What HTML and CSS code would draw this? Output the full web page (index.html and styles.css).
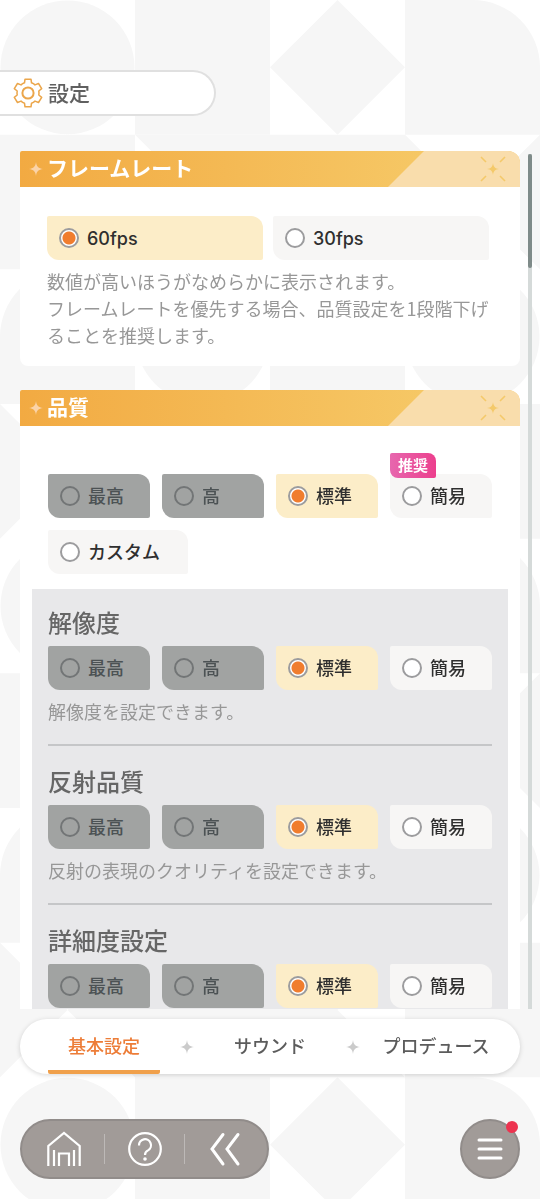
FILE: index.html
```html
<!DOCTYPE html>
<html lang="ja">
<head>
<meta charset="utf-8">
<meta name="viewport" content="width=device-width, initial-scale=1">
<title>設定</title>
<link rel="stylesheet" href="styles.css">
</head>
<body>
<svg class="backdrop" viewBox="0 0 540 1212" preserveAspectRatio="xMidYMin slice" aria-hidden="true">
  <defs>
    <path id="full" d="M0 0H135V135H0Z"/>
    <circle id="disc" cx="67.5" cy="67.5" r="67"/>
    <path id="diamond" d="M67.5 0L135 67.5L67.5 135L0 67.5Z"/>
    <path id="round-right" d="M0 0H67.5A67.5 67.5 0 0 1 135 67.5V135H0Z"/>
    <path id="round-left" d="M135 0H67.5A67.5 67.5 0 0 0 0 67.5V135H135Z"/>
    <path id="bowtie" d="M0 0L67.5 67.5L135 0V135L67.5 67.5L0 135Z"/>
    <path id="notch-left" d="M0 0H135V135H0L67.5 67.5Z"/>
    <path id="notch-right" d="M0 0H135L67.5 67.5L135 135H0Z"/>
    <g id="rows">
      <use href="#disc"/><use href="#full" x="135"/><use href="#diamond" x="270"/><use href="#round-right" x="405"/>
    </g>
  </defs>
  <g class="backdrop-shapes" transform="scale(1 0.9975)">
    <use href="#rows"/>
    <use href="#full" y="135"/><use href="#notch-left" x="135" y="135"/><use href="#full" x="270" y="135"/><use href="#bowtie" x="405" y="135"/>
    <use href="#round-left" y="270"/><use href="#disc" x="135" y="270"/><use href="#full" x="270" y="270"/><use href="#disc" x="405" y="270"/>
    <use href="#bowtie" y="405"/><use href="#full" x="135" y="405"/><use href="#diamond" x="270" y="405"/><use href="#full" x="405" y="405"/>
    <use href="#disc" y="540"/><use href="#full" x="135" y="540"/><use href="#diamond" x="270" y="540"/><use href="#round-right" x="405" y="540"/>
    <use href="#full" y="675"/><use href="#notch-left" x="135" y="675"/><use href="#full" x="270" y="675"/><use href="#bowtie" x="405" y="675"/>
    <use href="#round-left" y="810"/><use href="#disc" x="135" y="810"/><use href="#full" x="270" y="810"/><use href="#disc" x="405" y="810"/>
    <use href="#bowtie" y="945"/><use href="#full" x="135" y="945"/><use href="#notch-right" x="270" y="945"/><use href="#full" x="405" y="945"/>
    <use href="#rows" y="1080"/>
  </g>
</svg>
<svg class="symbols" width="0" height="0" aria-hidden="true">
  <symbol id="star" viewBox="0 0 14 14"><path d="M7 0C7.5 4.500 9.500 6.500 14 7C9.500 7.500 7.500 9.500 7 14C6.500 9.500 4.500 7.500 0 7C4.500 6.500 6.500 4.500 7 0Z"/></symbol>
  <symbol id="burst" viewBox="0 0 26 26"><path d="M13 7C13.500 11 15 12.500 19 13C15 13.500 13.500 15 13 19C12.500 15 11 13.500 7 13C11 12.500 12.500 11 13 7Z"/><path d="M1 1L6 6M25 1L20 6M1 25L6 20M25 25L20 20" fill="none" stroke="currentColor" stroke-width="1.600"/></symbol>
</svg>

<div class="app">
  <header class="page-title">
    <svg class="gear" viewBox="0 0 30 30" aria-hidden="true">
      <path d="M11.500 4.800L12 1.200H18L18.500 4.800Q20.500 5.500 22 6.900L25.500 5.500L28.700 10.700L25.800 13Q26.200 15 25.800 17L28.700 19.300L25.500 24.500L22 23.100Q20.500 24.500 18.500 25.200L18 28.800H12L11.500 25.200Q9.500 24.500 8 23.100L4.500 24.500L1.300 19.300L4.200 17Q3.800 15 4.200 13L1.300 10.700L4.500 5.500L8 6.900Q9.500 5.500 11.500 4.800Z"/>
      <circle cx="15" cy="15" r="5.600"/>
    </svg>
    <h1>設定</h1>
  </header>

  <div class="content">
    <main class="scroller">
      <section class="card">
        <header class="card-head">
          <svg class="head-star"><use href="#star"/></svg>
          <h2>フレームレート</h2>
          <div class="head-tail"><svg><use href="#burst"/></svg></div>
        </header>
        <div class="card-body framerate">
          <div class="pair">
            <label class="chip"><input type="radio" name="fps" checked><span>60fps</span></label>
            <label class="chip"><input type="radio" name="fps"><span>30fps</span></label>
          </div>
          <p class="note">数値が高いほうがなめらかに表示されます。<br>フレームレートを優先する場合、品質設定を1段階下げることを推奨します。</p>
        </div>
      </section>

      <section class="card">
        <header class="card-head">
          <svg class="head-star"><use href="#star"/></svg>
          <h2>品質</h2>
          <div class="head-tail"><svg><use href="#burst"/></svg></div>
        </header>
        <div class="card-body quality">
          <div class="quad">
            <label class="chip"><input type="radio" name="quality" disabled><span>最高</span></label>
            <label class="chip"><input type="radio" name="quality" disabled><span>高</span></label>
            <label class="chip"><input type="radio" name="quality" checked><span>標準</span></label>
            <label class="chip"><input type="radio" name="quality"><span>簡易</span><em class="badge">推奨</em></label>
          </div>
          <label class="chip custom"><input type="radio" name="quality"><span>カスタム</span></label>
        </div>
        <div class="details">
          <section class="detail">
            <h3>解像度</h3>
            <div class="quad">
              <label class="chip"><input type="radio" name="resolution" disabled><span>最高</span></label>
              <label class="chip"><input type="radio" name="resolution" disabled><span>高</span></label>
              <label class="chip"><input type="radio" name="resolution" checked><span>標準</span></label>
              <label class="chip"><input type="radio" name="resolution"><span>簡易</span></label>
            </div>
            <p class="note">解像度を設定できます。</p>
          </section>
          <section class="detail">
            <h3>反射品質</h3>
            <div class="quad">
              <label class="chip"><input type="radio" name="reflection" disabled><span>最高</span></label>
              <label class="chip"><input type="radio" name="reflection" disabled><span>高</span></label>
              <label class="chip"><input type="radio" name="reflection" checked><span>標準</span></label>
              <label class="chip"><input type="radio" name="reflection"><span>簡易</span></label>
            </div>
            <p class="note">反射の表現のクオリティを設定できます。</p>
          </section>
          <section class="detail">
            <h3>詳細度設定</h3>
            <div class="quad">
              <label class="chip"><input type="radio" name="lod" disabled><span>最高</span></label>
              <label class="chip"><input type="radio" name="lod" disabled><span>高</span></label>
              <label class="chip"><input type="radio" name="lod" checked><span>標準</span></label>
              <label class="chip"><input type="radio" name="lod"><span>簡易</span></label>
            </div>
          </section>
        </div>
      </section>
    </main>
    <div class="track"><div class="thumb"></div></div>
  </div>

  <nav class="tabs">
    <button class="tab active" type="button">基本設定</button>
    <svg><use href="#star"/></svg>
    <button class="tab" type="button">サウンド</button>
    <svg><use href="#star"/></svg>
    <button class="tab" type="button">プロデュース</button>
  </nav>

  <footer class="bottom">
    <div class="dock">
      <button type="button" aria-label="ホーム">
        <svg viewBox="0 0 36 36"><path d="M2.300 35V15L18 2L33.700 15V35M8 35V19M28 35V19M13 35V22.500H23V35"/></svg>
      </button>
      <button type="button" aria-label="ヘルプ">
        <svg viewBox="0 0 36 36"><circle cx="18" cy="18" r="15.800"/><path d="M12 14.500A6 6 0 1 1 21 19.400Q18 21 18 24"/><circle class="dot" cx="18" cy="28" r="1.800"/></svg>
      </button>
      <button type="button" aria-label="戻る">
        <svg viewBox="0 0 36 36"><path class="thick" d="M16 3.500L5 18L16 33M31 3.500L20 18L31 33"/></svg>
      </button>
    </div>
    <button class="menu" type="button" aria-label="メニュー">
      <svg viewBox="0 0 26 26"><path class="thick" d="M2 4H24M2 13H24M2 22H24"/></svg>
      <span class="alert"></span>
    </button>
  </footer>
</div>
</body>
</html>
```
FILE: styles.css
```css
* {
  box-sizing: border-box;
}

body {
  margin: 0;
  background: #fff;
  color: #2f2f2f;
  font-family: "Noto Sans CJK JP", sans-serif;
  font-size: 18px;
  line-height: 27px;
}

h1, h2, h3, p {
  margin: 0;
}

button {
  margin: 0;
  padding: 0;
  border: 0;
  background: none;
  font: inherit;
  color: inherit;
}

svg {
  display: block;
}

.symbols {
  position: absolute;
}

.backdrop {
  position: fixed;
  inset: 0;
  width: 100%;
  height: 101%;
  z-index: -1;
}

.backdrop-shapes {
  fill: #f6f6f6;
}

.app {
  display: flex;
  flex-direction: column;
  height: 100vh;
  padding: 70px 0 20px;
}

/* Title pill */
.page-title {
  display: flex;
  align-items: center;
  align-self: flex-start;
  gap: 5px;
  width: 40%;
  height: 46px;
  padding-left: 13px;
  background: #fff;
  border: 2px solid #e0e0e0;
  border-left: 0;
  border-radius: 0 23px 23px 0;
}

.page-title h1 {
  padding-bottom: 2px;
  font-size: 21px;
  font-weight: 500;
  color: #606060;
}

.gear {
  width: 30px;
  height: 30px;
  fill: none;
  stroke: #eba64b;
  stroke-width: 1.5;
  stroke-linejoin: round;
}

.gear circle {
  stroke-width: 2;
}

/* Scrolling settings */
.content {
  display: flex;
  flex: 1;
  gap: 8px;
  min-height: 0;
  margin-top: 35px;
  padding: 0 8px 0 20px;
}

.scroller {
  flex: 1;
  overflow-y: auto;
  scrollbar-width: none;
}

.track {
  width: 4px;
  margin-top: 3px;
  background: #d5dad9;
}

.thumb {
  height: 114px;
  border-radius: 2px;
  background: #7f8b89;
}

.card {
  margin-bottom: 24px;
  background: rgba(255, 255, 255, 0.94);
  border-radius: 2px 12px 8px 8px;
  overflow: hidden;
}

.card-head {
  display: flex;
  align-items: center;
  gap: 4px;
  height: 36px;
  padding-left: 9px;
  background: linear-gradient(90deg, #f2aa42, #f6c967 85%);
  color: #fff;
}

.card-head h2 {
  flex: 1;
  padding-bottom: 3px;
  font-size: 21px;
  font-weight: 700;
}

.head-star {
  width: 14px;
  height: 14px;
  fill: #fbd3a8;
}

.head-tail {
  display: flex;
  align-items: center;
  justify-content: flex-end;
  width: 132px;
  height: 100%;
  padding-right: 14px;
  background: #f9ddac;
  clip-path: polygon(36px 0, 100% 0, 100% 100%, 0 100%);
}

.head-tail svg {
  width: 26px;
  height: 26px;
  fill: #f4c96a;
  color: #f4c96a;
}

.framerate {
  padding: 29px 31px 17px 27px;
}

.quality {
  padding: 48px 28px 15px;
}

.pair, .quad {
  display: grid;
  grid-template-columns: 1fr 1fr;
  gap: 10px;
}

.quad {
  grid-template-columns: repeat(4, 1fr);
  gap: 12px;
}

.note {
  margin-top: 8px;
  color: #979797;
}

/* Radio chips */
.chip {
  position: relative;
  display: flex;
  align-items: center;
  gap: 8px;
  height: 44px;
  padding-left: 12px;
  background: #f7f6f5;
  border-radius: 2px 12px 2px 12px;
  font-family: Inter, "Noto Sans CJK JP", sans-serif;
  font-weight: 500;
}

.chip input {
  appearance: none;
  width: 20px;
  height: 20px;
  margin: 0;
  border: 2px solid #9c9c9e;
  border-radius: 50%;
  background: #fff;
}

.chip input:checked {
  background: radial-gradient(circle, #f07d2e 6px, #fff 7px);
}

.chip:has(:checked) {
  background: #fcedc8;
}

.chip:has(:disabled) {
  background: #a1a3a2;
  color: #4c5254;
}

.chip input:disabled {
  border-color: #727576;
  background: none;
}

.custom {
  width: 140px;
  margin-top: 12px;
}

.badge {
  position: absolute;
  top: -21px;
  left: 0;
  padding: 0 8px;
  background: linear-gradient(90deg, #e767ae, #ec3f8d);
  border-radius: 2px 8px 2px 8px;
  color: #fff;
  font-size: 15px;
  font-style: normal;
  font-weight: 700;
  line-height: 25px;
}

.details {
  margin: 0 12px;
  padding: 0 16px;
  background: #e8e8ea;
}

.detail {
  padding: 16px 0 19px;
}

.detail + .detail {
  padding-top: 18px;
  border-top: 2px solid #c5c6c8;
}

.detail h3 {
  margin-bottom: 7px;
  font-size: 24px;
  font-weight: 500;
  line-height: 34px;
  color: #666;
}

/* Tabs */
.tabs {
  display: grid;
  grid-template-columns: 1fr 14px 1fr 14px 1fr;
  column-gap: 20px;
  align-items: center;
  height: 55px;
  margin: 10px 20px 0;
  padding: 0 28px;
  background: #fff;
  border-radius: 28px;
  box-shadow: 0 1px 5px rgba(0, 0, 0, 0.16);
}

.tabs svg {
  width: 14px;
  height: 14px;
  fill: #cbcbcb;
}

.tab {
  height: 100%;
  padding-bottom: 2px;
  border-top: 4px solid transparent;
  border-bottom: 4px solid transparent;
  border-radius: 2px;
  font-weight: 500;
  color: #5c5c5c;
  white-space: nowrap;
}

.tab.active {
  border-bottom-color: #f0a04b;
  color: #ed7d38;
}

/* Bottom controls */
.bottom {
  display: flex;
  justify-content: space-between;
  margin-top: 45px;
  padding: 0 20px;
}

.dock, .menu {
  height: 60px;
  background: #a19b98;
  border: 2px solid #918c8a;
  border-radius: 30px;
}

.dock {
  display: flex;
  align-items: center;
  padding: 0 3px 0 2px;
}

.dock button {
  display: flex;
  align-items: center;
  justify-content: center;
  width: 80px;
  height: 30px;
}

.dock button + button {
  border-left: 1px solid #bdb9b7;
}

.bottom svg {
  flex: none;
  width: 36px;
  height: 36px;
  fill: none;
  stroke: #fff;
  stroke-width: 2.2;
}

.bottom .thick {
  stroke-width: 3;
  stroke-linecap: round;
}

.bottom .dot {
  fill: #fff;
  stroke: none;
}

.menu {
  position: relative;
  display: grid;
  place-items: center;
  width: 60px;
}

.menu svg {
  width: 26px;
  height: 26px;
}

.alert {
  position: absolute;
  top: 0;
  right: 0;
  width: 12px;
  height: 12px;
  background: #ed334f;
  border-radius: 50%;
}
```
